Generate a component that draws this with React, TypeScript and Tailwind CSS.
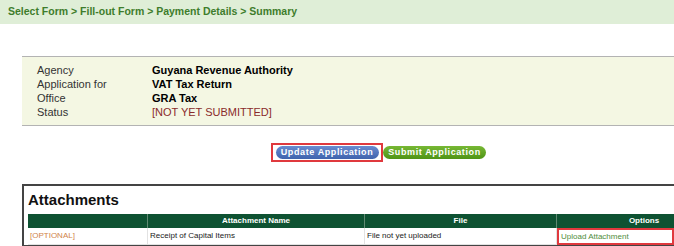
const info = [
  { label: "Agency", value: "Guyana Revenue Authority" },
  { label: "Application for", value: "VAT Tax Return" },
  { label: "Office", value: "GRA Tax" },
];

export default function App() {
  return (
    <div className="w-[674px] h-[246px] overflow-hidden bg-white font-['Liberation_Sans',Arial,sans-serif]">
      {/* Breadcrumb */}
      <div className="h-[24px] bg-[#dfeed7] flex items-center pl-[8px] text-[10.5px] font-bold text-[#3e7d2c]">
        Select Form &gt; Fill-out Form &gt; Payment Details &gt; Summary
      </div>

      {/* Summary panel */}
      <div className="mt-[32px] ml-[22px] border-y border-[#b3b3b3] bg-[#f4f7e3] pt-[6px] pb-[6px] pl-[15px] text-[11px] leading-[14px]">
        {info.map((r) => (
          <div key={r.label} className="flex">
            <span className="w-[115px] text-[#333]">{r.label}</span>
            <span className="font-bold text-black">{r.value}</span>
          </div>
        ))}
        <div className="flex">
          <span className="w-[115px] text-[#333]">Status</span>
          <span className="text-[#8a2b2b]">[NOT YET SUBMITTED]</span>
        </div>
      </div>

      {/* Buttons */}
      <div className="mt-[17px] pl-[271px] flex items-center">
        <div className="h-[19px] w-[112px] border-2 border-[#e0393e] flex items-center justify-center">
          <button className="h-[13px] w-[103px] rounded-full bg-gradient-to-b from-[#6a8bd0] to-[#3f63ad] text-white text-[9px] font-bold tracking-[0.6px] leading-none">
            Update Application
          </button>
        </div>
        <button className="h-[13px] w-[103px] rounded-full bg-gradient-to-b from-[#77b834] to-[#4f9415] text-white text-[9px] font-bold tracking-[0.6px] leading-none">
          Submit Application
        </button>
      </div>

      {/* Attachments */}
      <div className="mt-[22px] ml-[22px] border-l-2 border-t-2 border-b-2 border-[#444] pl-[4px] w-[720px]">
        <div className="h-[28px] flex items-center text-[15px] font-bold text-[#111]">Attachments</div>
        <div className="grid grid-cols-[120px_217px_192px_174px] text-[8px]">
          <div className="h-[14px] bg-[#0e5232] border-r border-[#5f8a72]" />
          <div className="h-[14px] bg-[#0e5232] border-r border-[#5f8a72] text-white font-bold flex items-center justify-center">Attachment Name</div>
          <div className="h-[14px] bg-[#0e5232] border-r border-[#5f8a72] text-white font-bold flex items-center justify-center">File</div>
          <div className="h-[14px] bg-[#0e5232] text-white font-bold flex items-center justify-center">Options</div>
          <div className="h-[17px] border-r border-b border-[#e2e2e2] flex items-center pl-[2px] text-[#d0844a]">[OPTIONAL]</div>
          <div className="h-[17px] border-r border-b border-[#e2e2e2] flex items-center pl-[2px] text-[#222]">Receipt of Capital Items</div>
          <div className="h-[17px] border-r border-b border-[#e2e2e2] flex items-center pl-[2px] text-[#222]">File not yet uploaded</div>
          <div className="h-[17px] w-[117px] border-2 border-[#e0393e] flex items-center pl-[2px] text-[#4f8d3c]">Upload Attachment</div>
        </div>
      </div>
    </div>
  );
}
